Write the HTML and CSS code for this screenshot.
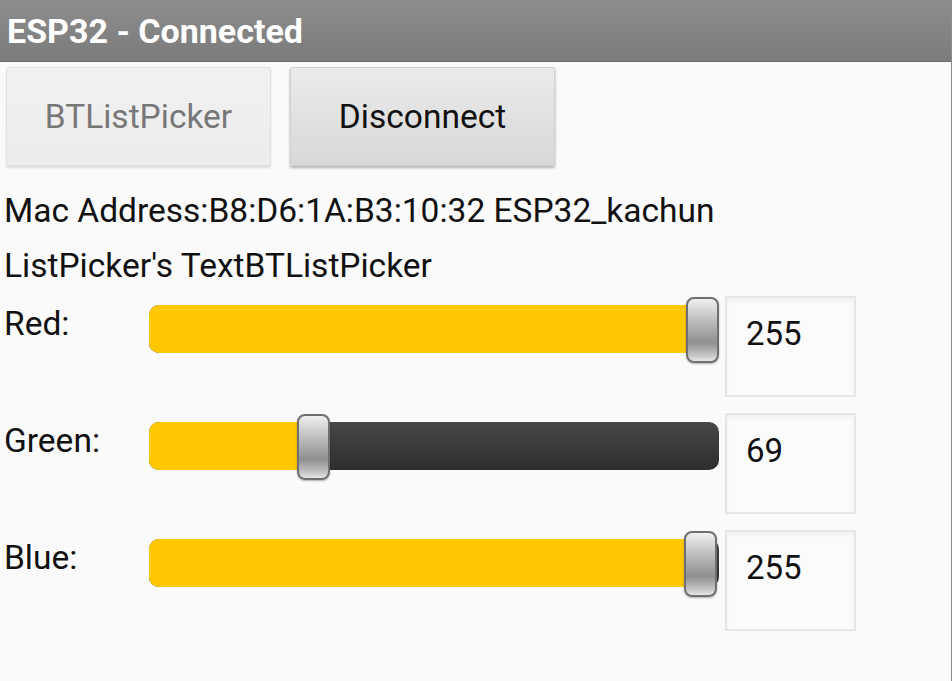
FILE: index.html
```html
<!DOCTYPE html>
<html>
<head>
<meta charset="utf-8">
<title>ESP32 - Connected</title>
<link rel="stylesheet" href="styles.css">
</head>
<body>
<div class="screen">
  <header class="titlebar">ESP32 - Connected</header>
  <div class="buttons">
    <button class="btn btn-disabled">BTListPicker</button>
    <button class="btn btn-active">Disconnect</button>
  </div>
  <div class="info info-mac">Mac Address:B8:D6:1A:B3:10:32 ESP32_kachun</div>
  <div class="info info-lp">ListPicker's TextBTListPicker</div>

  <div class="row">
    <div class="label">Red:</div>
    <div class="slider">
      <div class="track"><div class="fill" style="width: 553px"></div></div>
      <div class="thumb" style="left: 537px"></div>
    </div>
    <div class="valuebox">255</div>
  </div>

  <div class="row">
    <div class="label">Green:</div>
    <div class="slider">
      <div class="track"><div class="fill" style="width: 164px"></div></div>
      <div class="thumb" style="left: 148px"></div>
    </div>
    <div class="valuebox">69</div>
  </div>

  <div class="row">
    <div class="label">Blue:</div>
    <div class="slider">
      <div class="track"><div class="fill" style="width: 553px"></div></div>
      <div class="thumb" style="left: 535px"></div>
    </div>
    <div class="valuebox">255</div>
  </div>
</div>
</body>
</html>
```

FILE: styles.css
```css
html, body {
  margin: 0;
  padding: 0;
  background: #fafafa;
}

.screen {
  width: 951px;
  height: 681px;
  background: #fafafa;
  border-right: 1px solid #8c8c8c;
  font-family: Roboto, "Liberation Sans", sans-serif;
  color: #111;
  overflow: hidden;
}

.titlebar {
  height: 62px;
  box-sizing: border-box;
  border-bottom: 1px solid #6c6c6c;
  background: linear-gradient(#8d8d8d, #7b7b7b);
  color: #fff;
  font-weight: 700;
  font-size: 34px;
  line-height: 62px;
  padding-left: 7px;
}

.buttons {
  display: flex;
  gap: 19px;
  margin-top: 5px;
  padding-left: 6px;
}

.btn {
  width: 265px;
  height: 99px;
  font-family: Roboto, "Liberation Sans", sans-serif;
  font-size: 33.5px;
  border-radius: 2px;
  padding: 0;
}

.btn-disabled {
  color: #777;
  background: linear-gradient(#f1f1f1, #ececec);
  border: 1px solid #e2e2e2;
  box-shadow: 0 2px 2px rgba(0,0,0,0.12);
}

.btn-active {
  color: #111;
  background: linear-gradient(#ebebeb, #d8d8d8);
  border: 1px solid #d0d0d0;
  box-shadow: 0 2px 3px rgba(0,0,0,0.3);
}

.info {
  font-size: 33.5px;
  line-height: 36px;
  padding-left: 4px;
  white-space: nowrap;
}

.info-mac {
  margin-top: 27px;
}

.info-lp {
  margin-top: 19px;
}

.row {
  display: flex;
  align-items: flex-start;
  margin-top: 12px;
  height: 101px;
}

.row + .row {
  margin-top: 16px;
}

.label {
  width: 145px;
  padding-left: 4px;
  padding-top: 10px;
  font-size: 33.5px;
  line-height: 36px;
}

.slider {
  position: relative;
  width: 570px;
  height: 66px;
  margin-top: 1px;
}

.track {
  margin-top: 8px;
  height: 48px;
  border-radius: 10px;
  background: linear-gradient(#474747, #2e2e2e);
  overflow: hidden;
}

.fill {
  height: 100%;
  background: #ffc800;
}

.thumb {
  position: absolute;
  top: 0;
  width: 29px;
  height: 62px;
  border: 2px solid #6f6f6f;
  border-radius: 8px;
  background: linear-gradient(#f0f0f0 0%, #bdbdbd 35%, #8f8f8f 70%, #c8c8c8 92%, #e6e6e6 100%);
  box-shadow: 0 1px 2px rgba(0,0,0,0.3);
}

.valuebox {
  margin-left: 6px;
  width: 131px;
  height: 101px;
  box-sizing: border-box;
  border: 2px solid #e6e6e6;
  background: #fbfbfb;
  box-shadow: inset 0 3px 4px rgba(0,0,0,0.04);
  font-size: 33px;
  line-height: 36px;
  padding: 18px 0 0 19px;
}
```
